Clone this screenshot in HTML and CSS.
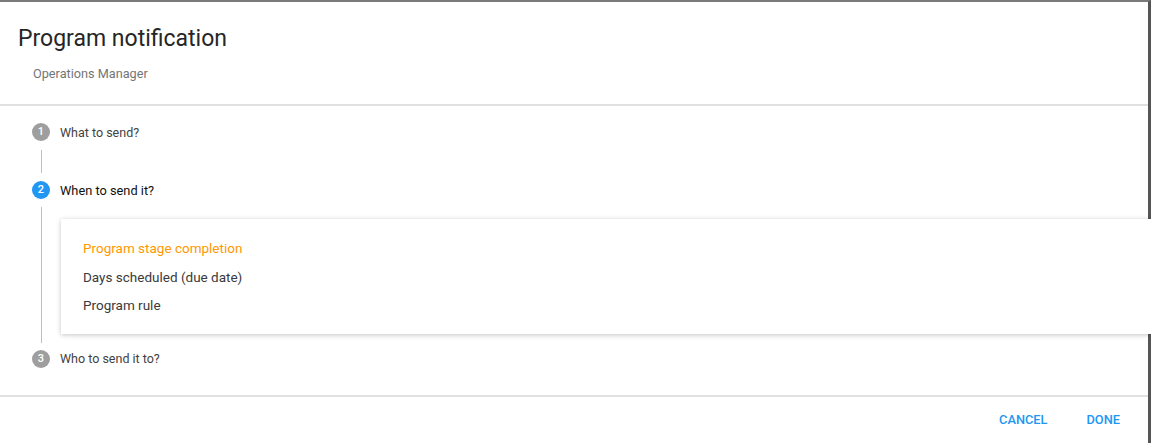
FILE: index.html
```html
<html>

<head>
    <title>Program notification</title>
    <link rel="stylesheet" href="styles.css">
</head>

<body>
    <div class="dialog">
        <div class="dialog-header">
            <h1 class="dialog-title">Program notification</h1>
            <p class="dialog-subtitle">Operations Manager</p>
        </div>

        <div class="dialog-body">
            <div class="stepper">
                <div class="step">
                    <span class="step-icon">1</span>
                    <span class="step-label">What to send?</span>
                </div>
                <div class="step-content step-content-empty"></div>

                <div class="step step-active">
                    <span class="step-icon">2</span>
                    <span class="step-label">When to send it?</span>
                </div>
                <div class="step-content">
                    <!-- Меню выбора триггера -->
                    <div class="menu">
                        <div class="menu-item menu-item-selected">Program stage completion</div>
                        <div class="menu-item">Days scheduled (due date)</div>
                        <div class="menu-item">Program rule</div>
                    </div>
                </div>

                <div class="step">
                    <span class="step-icon">3</span>
                    <span class="step-label">Who to send it to?</span>
                </div>
            </div>
        </div>

        <div class="dialog-actions">
            <button class="flat-button">Cancel</button>
            <button class="flat-button">Done</button>
        </div>
    </div>
</body>

</html>
```

FILE: styles.css
```css
body {
    font-family: Roboto, "Liberation Sans", Arial, sans-serif;
    background-color: #fff;
    margin: 0;
    padding: 0;
    overflow: hidden;
}

.dialog {
    width: 1148px;
    height: 441px;
    background-color: #fff;
    border-top: 2px solid #7a7a7a;
    border-right: 3px solid #555;
    display: flex;
    flex-direction: column;
}

.dialog-header {
    padding: 21px 18px 0;
    height: 81px;
    border-bottom: 2px solid #e0e0e0;
}

.dialog-title {
    margin: 0;
    font-size: 23px;
    line-height: 32px;
    font-weight: 400;
    color: #262626;
}

.dialog-subtitle {
    margin: 10px 0 0 15px;
    font-size: 12.7px;
    line-height: 18px;
    color: #757575;
}

.dialog-body {
    padding: 14px 0 0 32px;
    height: 275px;
    border-bottom: 2px solid #e0e0e0;
}

.step {
    display: flex;
    align-items: center;
    height: 24px;
}

.step-icon {
    width: 18px;
    height: 18px;
    border-radius: 50%;
    background-color: #9e9e9e;
    color: #fff;
    font-size: 11px;
    font-weight: 500;
    line-height: 18px;
    text-align: center;
}

.step-active .step-icon {
    background-color: #2196f3;
}

.step-label {
    margin-left: 10px;
    font-size: 12.5px;
    color: #424242;
}

.step-active .step-label {
    color: #111;
    font-size: 12.8px;
}

.step-content {
    margin: 5px 0 4px 9px;
    padding: 12px 0 9px 19px;
    border-left: 1px solid #bdbdbd;
}

.step-content-empty {
    margin: 6px 0 5px 9px;
    padding: 0;
    height: 23px;
}

.menu {
    width: 1046px;
    padding: 15px 22px 14px;
    background-color: #fff;
    box-shadow: 0 1px 6px rgba(0, 0, 0, 0.12), 0 1px 4px rgba(0, 0, 0, 0.12);
}

.menu-item {
    font-size: 13.5px;
    line-height: 28.5px;
    color: #3a3a3a;
}

.menu-item-selected {
    color: #ff9800;
}

.dialog-actions {
    flex: 1;
    display: flex;
    justify-content: flex-end;
    align-items: center;
    padding: 0 12px 2px 0;
}

.flat-button {
    background: none;
    border: none;
    padding: 0 16px;
    margin-left: 7px;
    height: 36px;
    font-family: inherit;
    font-size: 12.8px;
    font-weight: 500;
    text-transform: uppercase;
    color: #2196f3;
    cursor: pointer;
}
```
